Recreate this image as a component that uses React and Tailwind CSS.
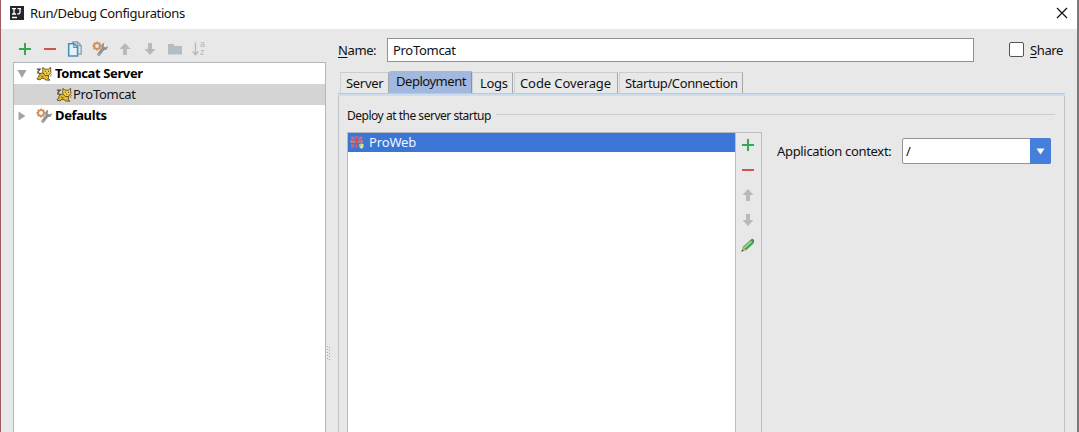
const Plus = () => (
  <svg width="16" height="16" viewBox="0 0 16 16" shapeRendering="crispEdges">
    <path d="M7 2h2v12H7zM2 7h12v2H2z" fill="#35a853" />
  </svg>
);

const Minus = () => (
  <svg width="16" height="16" viewBox="0 0 16 16" shapeRendering="crispEdges">
    <path d="M2 7h12v2H2z" fill="#cf5550" />
  </svg>
);

const Up = () => (
  <svg width="16" height="16" viewBox="0 0 16 16">
    <path d="M8 2l5.500 6H10v6H6V8H2.500z" fill="#b9b9b9" />
  </svg>
);

const Down = () => (
  <svg width="16" height="16" viewBox="0 0 16 16">
    <path d="M8 14l5.500-6H10V2H6v6H2.500z" fill="#b9b9b9" />
  </svg>
);

const Copy = () => (
  <svg width="16" height="16" viewBox="0 0 16 16" fill="none">
    <path d="M5.500 2.500V1h5l3.700 3.500V13H11.500" fill="#dce6ec" stroke="#8ba3b0" strokeWidth="1.300" />
    <path d="M10.500 1v3.700h3.500" stroke="#8ba3b0" strokeWidth="1.200" />
    <path d="M1.700 2.700h5.600l3.300 3.300v9H1.700z" fill="#e6f2f9" stroke="#4c90b5" strokeWidth="1.600" />
    <path d="M6.800 3v3.500H10.500" stroke="#4c90b5" strokeWidth="1.200" />
  </svg>
);

const Wrench = () => (
  <svg width="16" height="16" viewBox="0 0 16 16" fill="none" className="shrink-0">
    <path d="M11.500 7.300L6.800 13.300" stroke="#8b9298" strokeWidth="3.200" strokeLinecap="round" />
    <path d="M12.200 1.700c-2.500.6-3.600 3-2.700 5.200.9 2 3.400 2.600 5 1.500 1-.8 1.500-2.200 1.300-3.400l-2.200 1.500-2-.8z" fill="#8b9298" />
    <circle cx="5" cy="5" r="2.900" stroke="#cf8d58" strokeWidth="1.900" />
    <path d="M5 .4v1.800M5 8v1.700M.4 5h1.800M8 5h1.600M1.700 1.700l1.300 1.300M7 7l1.300 1.300M8.300 1.700L7 3M3 7L1.700 8.300" stroke="#cf8d58" strokeWidth="1.400" />
    <circle cx="6.800" cy="13.200" r=".6" fill="#ddd" />
  </svg>
);

const Folder = () => (
  <svg width="16" height="16" viewBox="0 0 16 16">
    <path d="M1 3h5.500l1.300 2H15v8.500H1z" fill="#b4bdc4" />
  </svg>
);

const Sort = () => (
  <div className="flex h-4 w-4 items-center text-[#b6b6b6]">
    <svg width="8" height="16" viewBox="0 0 8 16" fill="none" stroke="currentColor" strokeWidth="1.300" className="shrink-0">
      <path d="M3.500 1.500v12M.7 10.500l2.800 3.200 2.800-3.200" />
    </svg>
    <div className="flex flex-col pb-[2px] font-['Liberation_Sans',sans-serif] text-[9px] leading-[8px]">
      <span>a</span>
      <span>z</span>
    </div>
  </div>
);

const Cat = () => (
  <svg width="16" height="16" viewBox="0 0 16 16" fill="none" className="shrink-0">
    <path d="M7 7C4.500 7 2.800 8.500 2.600 11l-1.700 2 3 .8 2-1.500 2.400.3 1.200 1.400 4.500.2-1.700-1.700.5-3z" fill="#e9b91d" stroke="#514927" strokeWidth=".9" />
    <path d="M6.800 1.500l2.300 1.700h3.200l2.300-1.900.2 5.200-2.400 3H9.200L6.800 6.500z" fill="#f6cf45" stroke="#5a4d21" strokeWidth=".9" />
    <path d="M.8 3.200h3.400L2 5.600l-.2 1.300 3 .6" stroke="#514927" strokeWidth="1.200" />
    <path d="M8.800 5.200h1M12 5.200h1M10.300 7.200h1" stroke="#3b3210" strokeWidth="1.100" />
    <path d="M14.500 8l1.200.5M14 9.500l1.300 1M5 10l2.500 1" stroke="#514927" strokeWidth=".8" />
  </svg>
);

const Artifact = () => (
  <svg width="15" height="15" viewBox="0 0 15 15" className="shrink-0">
    <path d="M1 1.500h3.300v3H1zM5 1h3v3.500H5zM9 1.500h3.500v3H9zM1 9h3.300v3.500H1zM5 9h3v3.500H5z" fill="#b66b86" />
    <path d="M0 5.200h13v2.600H0z" fill="#9b8cae" />
    <path d="M5.200 2.500h2.600V12H5.200zM2 4.500h9v1.300H2z" fill="#d84c59" />
    <path d="M2 2.500l2 2M11 2.500l-2 2" stroke="#e88584" />
    <path d="M9.500 9.200l2-.7 2 .7v2c0 1.300-.8 2-2 2.600-1.200-.6-2-1.300-2-2.600z" fill="#efe57e" />
    <path d="M9.500 9.200l2-.7v3h-2z" fill="#a9c9a0" />
  </svg>
);

const Pencil = () => (
  <svg width="16" height="16" viewBox="0 0 16 16">
    <path d="M1.500 14.500l1.200-4.500 3.600 3.300z" fill="#d3a477" />
    <path d="M1.500 14.500l.6-2 1.600 1.400z" fill="#333" />
    <path d="M2.700 10l7.600-7 3.500 3.300L6.300 13.300z" fill="#43a54c" />
    <path d="M3.700 10.300l7-6.500 1.300 1.200-7.100 6.500z" fill="#94db8d" />
    <path d="M10.300 3l1.500-1.200c1-.5 2.900 1.300 2.400 2.500l-.8 2z" fill="#647b65" />
  </svg>
);

const Tab = ({ children, className }) => (
  <div className={"flex h-[21px] shrink-0 items-center border-l border-t border-r border-l-[#cfd3d6] border-t-[#c9cdd0] border-r-[#a3a8ab] whitespace-nowrap pl-[5px] " + className}>
    {children}
  </div>
);

export default function App() {
  return (
    <div className="flex h-[432px] w-[1079px] overflow-hidden bg-[#e8e8e8] font-['Noto_Sans','Open_Sans',sans-serif] text-[13px] leading-[20px] text-[#111]">
      <div className="w-px shrink-0 bg-[#a35961]" />
      <div className="flex w-[1076px] shrink-0 flex-col">
        <header className="flex h-[29px] shrink-0 items-center bg-white pl-[9px] pr-[9px]">
          <div className="mb-[3px] flex h-[14px] w-[14px] flex-col bg-[#24262b] pl-[2px] pt-px">
            <svg width="10" height="12" viewBox="0 0 10 12" fill="none" stroke="white" strokeWidth="1.300">
              <path d="M0 1.600h4M2 1.600v5.300M0 7h4M5.500 1.600H9M8 1.600v4q0 1.500-2.800 1.300M0 10.500h5" />
            </svg>
          </div>
          <h1 className="mb-[3px] ml-[6px] grow whitespace-nowrap text-[13px] tracking-[-0.37px]">Run/Debug Configurations</h1>
          <svg width="12" height="12" viewBox="0 0 12 12" stroke="#111" strokeWidth="1.200" className="mb-[3px]">
            <path d="M1 1l10 10M11 1L1 11" />
          </svg>
        </header>
        <div className="flex grow">
          <aside className="ml-3 flex w-[313px] shrink-0 flex-col">
            <div className="flex h-[33px] items-center gap-[9px] pl-1 pt-[7px]">
              <Plus /><Minus /><Copy /><Wrench /><Up /><Down /><Folder /><Sort />
            </div>
            <div className="flex grow flex-col border-l border-r border-t border-[#b4b8ba] bg-white">
              <div className="flex h-[21px] items-center pl-[3px]">
                <svg width="10" height="10" viewBox="0 0 10 10" className="mr-[9px] shrink-0"><path d="M.5 1h9L5 9z" fill="#a3a3a3" /></svg>
                <Cat /><b className="mb-[2px] ml-[3px] tracking-[-0.38px] text-black">Tomcat Server</b>
              </div>
              <div className="flex h-[21px] items-center bg-[#d4d4d4] pl-[42px]">
                <Cat /><span className="mb-[2px] ml-px tracking-[-0.3px]">ProTomcat</span>
              </div>
              <div className="flex h-[21px] items-center pl-[3px]">
                <svg width="10" height="10" viewBox="0 0 10 10" className="mr-[9px] shrink-0"><path d="M1.500 .5v9l7-4.500z" fill="#a3a3a3" /></svg>
                <Wrench /><b className="mb-[2px] ml-[3px] tracking-[-0.38px] text-black">Defaults</b>
              </div>
            </div>
          </aside>
          <div className="flex w-[12px] shrink-0 flex-col pl-px pt-[317px]">
            <svg width="5" height="14" viewBox="0 0 5 14" fill="#aaa">
              <path d="M0 0h1v1H0zM2 1h1v1H2zM0 3h1v1H0zM2 4h1v1H2zM0 6h1v1H0zM2 7h1v1H2zM0 9h1v1H0zM2 10h1v1H2zM0 12h1v1H0zM2 13h1v1H2z" />
            </svg>
          </div>
          <main className="flex w-[727px] shrink-0 flex-col">
            <div className="flex h-[42px] shrink-0 items-center">
              <label className="w-[49px] pb-px tracking-[-0.4px]"><u className="underline-offset-2">N</u>ame:</label>
              <div className="flex h-6 w-[587px] items-center border border-[#8f9396] bg-white pl-[5px] tracking-[-0.3px]">ProTomcat</div>
              <div className="mb-[2px] ml-[35px] h-[15px] w-[15px] rounded-[2px] border border-[#555] bg-white" />
              <label className="ml-[6px] whitespace-nowrap pb-px tracking-[-0.4px]"><u className="underline-offset-2">S</u>hare</label>
            </div>
            <div className="flex h-[22px] shrink-0 items-end pl-[2px]">
              <Tab className="w-[49px] tracking-[-0.3px]">Server</Tab>
              <div className="flex h-[22px] w-[83px] items-center rounded-t-[2px] border-r border-[#8294ae] bg-[#a3b8de] pb-[2px] pl-[7px] tracking-[-0.47px]">Deployment</div>
              <Tab className="w-[41px] pl-[7px] tracking-[-0.3px]">Logs</Tab>
              <Tab className="ml-px w-[104px] tracking-[-0.1px]">Code Coverage</Tab>
              <Tab className="ml-px w-[124px] tracking-[-0.4px]">Startup/Connection</Tab>
            </div>
            <div className="h-[3px] shrink-0 border-t border-[#b4cbe2] bg-[#cbddef]" />
            <section className="flex grow flex-col border-l border-r border-[#bdc2c6] pl-2">
              <div className="flex h-[36px] shrink-0 items-center">
                <span className="w-[149px] whitespace-nowrap pt-[3px] text-[12px] tracking-[-0.48px]">Deploy at the server startup</span>
                <div className="h-px w-[559px] bg-[#cbcdce]" />
              </div>
              <div className="flex grow">
                <div className="w-[388px] shrink-0 border-l border-t border-[#b5bac0] bg-white">
                  <div className="flex h-[19px] items-center bg-[#3b75d6] pl-[2px] text-[#f0f5ff]">
                    <Artifact /><span className="mb-[2px] ml-1 tracking-[-0.15px]">ProWeb</span>
                  </div>
                </div>
                <div className="flex w-[27px] shrink-0 flex-col items-center gap-[9px] border-l border-r border-t border-[#bcbfc1] pr-px pt-[4px]">
                  <Plus /><Minus /><Up /><Down /><Pencil />
                </div>
                <div className="mt-[6px] flex h-[26px] grow items-center pl-[15px]">
                  <span className="w-[125px] whitespace-nowrap pb-px tracking-[-0.32px]">Application context:</span>
                  <div className="flex h-[26px] w-[149px] rounded-[2px] border border-[#929699] bg-white">
                    <span className="grow pl-[3px] pt-[2px]">/</span>
                    <div className="-my-px -mr-px flex w-[21px] items-center justify-center rounded-r-[2px] bg-[#467edb]">
                      <svg width="9" height="7" viewBox="0 0 9 7"><path d="M.5.5h8l-4 6z" fill="white" /></svg>
                    </div>
                  </div>
                </div>
              </div>
            </section>
          </main>
        </div>
      </div>
      <div className="w-px shrink-0 bg-[#c45c65]" />
      <div className="w-px shrink-0 bg-[#777]" />
    </div>
  );
}
